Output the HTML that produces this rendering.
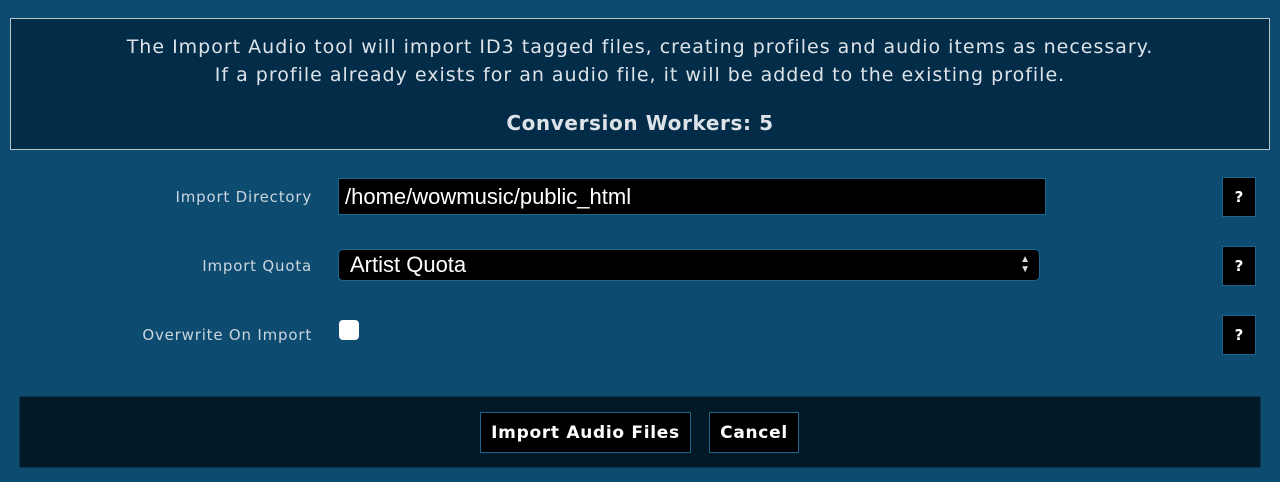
<!DOCTYPE html>
<html><head><style>
body{margin:0;width:1280px;height:482px;background:#0d4b71;font-family:"DejaVu Sans",Verdana,sans-serif;position:relative;overflow:hidden}
.top{position:absolute;left:10px;top:18px;width:1258px;height:130px;background:#022c48;border:1px solid #b8c4cc;color:#dde3e8;text-align:center;font-size:19px;letter-spacing:1px}
.lbl{position:absolute;right:968px;font-size:15px;letter-spacing:0.8px;color:#c9d5dd}
.inp{position:absolute;left:338px;background:#000;border:1px solid #1c6690;color:#fff;font-family:"Liberation Sans",Arial,sans-serif;font-size:22px;box-sizing:border-box}
.help{position:absolute;left:1222px;width:34px;height:40px;background:#000;border:1px solid #1c6690;box-sizing:border-box;color:#fff;font-weight:bold;font-size:15px;text-align:center;line-height:38px}
.bar{position:absolute;left:19px;top:396px;width:1242px;height:72px;background:#011827;border:1px solid #0a3550;box-sizing:border-box}
.btn{position:absolute;top:412px;height:41px;background:#000;border:1px solid #1c6690;box-sizing:border-box;color:#fff;font-weight:bold;font-size:17px;letter-spacing:0.7px;line-height:41px;text-align:center}
</style></head><body>
<div class="top">
<div style="position:absolute;top:14px;width:100%;line-height:28px">The Import Audio tool will import ID3 tagged files, creating profiles and audio items as necessary.<br>If a profile already exists for an audio file, it will be added to the existing profile.</div>
<div style="position:absolute;top:92px;width:100%;font-weight:bold;font-size:20px;letter-spacing:0.6px">Conversion Workers: 5</div>
</div>
<div class="lbl" style="top:188px">Import Directory</div>
<div class="inp" style="top:178px;width:708px;height:37px;line-height:35px;padding-left:6px">/home/wowmusic/public_html</div>
<div class="help" style="top:177px">?</div>
<div class="lbl" style="top:257px">Import Quota</div>
<div class="inp" style="top:249px;width:702px;height:32px;line-height:30px;padding-left:11px;border-radius:5px">Artist Quota<span style="position:absolute;right:9px;top:0;font-size:10px;line-height:10px;padding-top:5px;color:#ddd">▲<br>▼</span></div>
<div class="help" style="top:246px">?</div>
<div class="lbl" style="top:326px">Overwrite On Import</div>
<div style="position:absolute;left:339px;top:320px;width:20px;height:20px;background:#fff;border-radius:4px"></div>
<div class="help" style="top:315px">?</div>
<div class="bar"></div>
<div class="btn" style="left:480px;width:211px">Import Audio Files</div>
<div class="btn" style="left:709px;width:90px">Cancel</div>
</body></html>
